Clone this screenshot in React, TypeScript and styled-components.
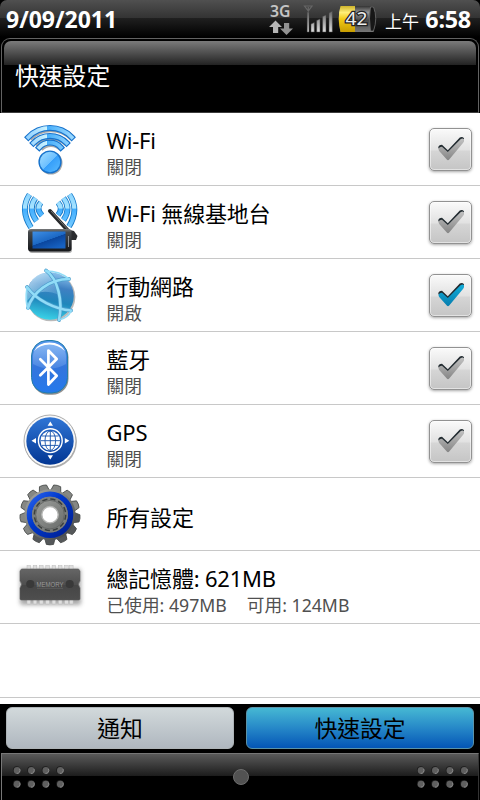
import React, { useState } from 'react'
import styled, { createGlobalStyle } from 'styled-components'

const WifiArcs = 'M28.3 24.2A30 30 0 0 1 71.7 24.2M33.4 30A23 23 0 0 1 66.6 30M39.2 34.4A14.5 14.5 0 0 1 60.8 34.4'

const WifiIcon = () => (
  <Icon viewBox="0 0 100 72">
    <defs>
      <linearGradient id="wfA" gradientUnits="userSpaceOnUse" x1="26" y1="0" x2="76" y2="0">
        <stop offset="0" stopColor="#8fd0ff" />
        <stop offset=".41" stopColor="#c9f2ff" />
        <stop offset=".42" stopColor="#45aefb" />
        <stop offset="1" stopColor="#a5deff" />
      </linearGradient>
      <linearGradient id="wfB" x1="0" y1="0" x2="1" y2="1">
        <stop offset="0" stopColor="#a5deff" />
        <stop offset=".5" stopColor="#6cc0ff" />
        <stop offset=".52" stopColor="#369ffa" />
        <stop offset="1" stopColor="#58baff" />
      </linearGradient>
    </defs>
    <path d={WifiArcs} fill="none" stroke="#555" strokeOpacity=".5" strokeWidth="6.2" transform="translate(1 1.2)" />
    <path d={WifiArcs} fill="none" stroke="#1672cc" strokeWidth="6" strokeLinecap="square" />
    <path d={WifiArcs} fill="none" stroke="url(#wfA)" strokeWidth="3.8" strokeLinecap="square" />
    <circle cx="50.9" cy="50" r="11.6" fill="#555" opacity=".5" />
    <circle cx="50" cy="49" r="11.6" fill="#1672cc" />
    <circle cx="50" cy="49" r="10.2" fill="url(#wfB)" />
  </Icon>
)

const waves = 'M29.5 8.5Q19.5 23.5 31 41.5M35.5 12Q27.5 22.5 36.5 35M41 16.5Q35.5 22.5 42 29.5M69.5 8.5Q79.5 23.5 69 40.5M63.5 12Q71.5 22.5 63.5 34M58 16.5Q63.5 22.5 58 29'

const HotspotIcon = () => (
  <Icon viewBox="0 0 100 72">
    <defs>
      <linearGradient id="hsW" gradientUnits="userSpaceOnUse" x1="0" y1="6" x2="0" y2="42">
        <stop offset="0" stopColor="#86d2ff" />
        <stop offset=".45" stopColor="#a8e4ff" />
        <stop offset=".47" stopColor="#42aeff" />
        <stop offset="1" stopColor="#78ccff" />
      </linearGradient>
      <linearGradient id="hsP" x1="0" y1="0" x2="0" y2="1">
        <stop offset="0" stopColor="#77797b" />
        <stop offset=".15" stopColor="#45484b" />
        <stop offset="1" stopColor="#15171a" />
      </linearGradient>
      <linearGradient id="hsS" x1="0" y1="0" x2=".7" y2="1">
        <stop offset="0" stopColor="#3f90e6" />
        <stop offset=".55" stopColor="#1c68c4" />
        <stop offset=".57" stopColor="#0a469e" />
        <stop offset="1" stopColor="#1762c2" />
      </linearGradient>
    </defs>
    <path d={waves} fill="none" stroke="#177bca" strokeWidth="5.8" />
    <path d={waves} fill="none" stroke="url(#hsW)" strokeWidth="4.1" />
    <rect x="29" y="45" width="43" height="22" rx="3" fill="#555" opacity=".5" />
    <path d="M50 25L71 48" stroke="#27292b" strokeWidth="4" strokeLinecap="round" />
    <path d="M51 25L71 47" stroke="#777" strokeWidth="1" />
    <path d="M66 43L74 45L77.5 50L76 54L68 54Z" fill="#2a2c2f" />
    <rect x="28" y="43" width="43.5" height="22.5" rx="3" fill="url(#hsP)" />
    <rect x="32.5" y="45.5" width="33" height="17" fill="url(#hsS)" />
    <path d="M68.5 50V61" stroke="#8b8e91" strokeWidth="1" />
  </Icon>
)

const NetworkIcon = () => (
  <Icon viewBox="0 0 100 72">
    <defs>
      <linearGradient id="ntA" x1=".6" y1="0" x2=".4" y2="1">
        <stop offset="0" stopColor="#8cc4ee" />
        <stop offset=".3" stopColor="#3f80c2" />
        <stop offset=".6" stopColor="#1f86bb" />
        <stop offset="1" stopColor="#3bd5e9" />
      </linearGradient>
      <linearGradient id="ntB" x1="0" y1="0" x2="1" y2="1">
        <stop offset="0" stopColor="#e4f6ff" />
        <stop offset="1" stopColor="#5da9dc" stopOpacity=".3" />
      </linearGradient>
    </defs>
    <circle cx="51" cy="38" r="24.3" fill="#666" opacity=".45" />
    <circle cx="50" cy="37" r="23.8" fill="url(#ntA)" />
    <path d="M27 33Q31 14 49 13.5Q58 22 60 36Q38 27 27 42Z" fill="url(#ntB)" opacity=".85" />
    <g fill="none" stroke="#4b9dcc" strokeWidth="3.8" strokeLinecap="round">
      <path d="M46 11.5C58 20 63 42 59 61" />
      <path d="M27 28C36 41 55 50 71 51.5" />
      <path d="M69 20C49 20 32 34 28 49" />
    </g>
    <g fill="none" stroke="#91dcf7" strokeWidth="2.6" strokeLinecap="round">
      <path d="M46 11.5C58 20 63 42 59 61" />
      <path d="M27 28C36 41 55 50 71 51.5" />
      <path d="M69 20C49 20 32 34 28 49" />
      <path d="M27 29Q25 42 28 50M46 12Q60 12 69 20M59 61Q68 59 71 52" strokeWidth="1.7" />
    </g>
  </Icon>
)

const BluetoothIcon = () => (
  <Icon viewBox="0 0 100 72">
    <defs>
      <linearGradient id="btA" x1="0" y1="0" x2="0" y2="1">
        <stop offset="0" stopColor="#5598ed" />
        <stop offset=".5" stopColor="#3475dc" />
        <stop offset="1" stopColor="#2479ec" />
      </linearGradient>
      <linearGradient id="btB" x1="0" y1="0" x2="0" y2="1">
        <stop offset="0" stopColor="#b5d6fb" />
        <stop offset="1" stopColor="#5d94e7" />
      </linearGradient>
    </defs>
    <rect x="32" y="9.3" width="36.5" height="53.5" rx="16" fill="#444" opacity=".6" />
    <rect x="31.5" y="8.5" width="36" height="52.5" rx="15.5" fill="url(#btA)" stroke="#237eaa" />
    <path d="M33 32V25Q33 12 49.5 11Q66 12 66 25V32Q50 41 33 32Z" fill="url(#btB)" opacity=".55" />
    <path d="M34 19Q38 10.5 49.5 10.5Q61 10.5 65 19Q58 12.5 49.5 12.5Q40 12.5 34 19Z" fill="#fff" />
    <path d="M40.3 27.3L56.7 43.8L48.4 52.5V18.5L56.7 27L40.3 43.3" fill="none" stroke="#fff" strokeWidth="2.7" strokeLinecap="round" strokeLinejoin="round" />
  </Icon>
)

const GpsIcon = () => (
  <Icon viewBox="0 0 100 72">
    <defs>
      <linearGradient id="gpA" x1="0" y1="0" x2="0" y2="1">
        <stop offset="0" stopColor="#2f75d5" />
        <stop offset="1" stopColor="#023693" />
      </linearGradient>
    </defs>
    <circle cx="50.5" cy="37" r="26.3" fill="#888" opacity=".65" />
    <circle cx="50" cy="36" r="26" fill="#f8f8f8" stroke="#999" strokeWidth=".8" />
    <circle cx="50" cy="36" r="23.7" fill="url(#gpA)" />
    <circle cx="50.3" cy="35.7" r="11.9" fill="none" stroke="#fff" strokeWidth="1.4" />
    <g fill="#fff">
      <path d="M50.3 16.5L53 20.8H47.6ZM50.3 54.5L53 50.3H47.6ZM31.5 35.7L36 33V38.4ZM69.3 35.7L64.8 33V38.4Z" />
      <circle cx="50.3" cy="35.7" r="9.8" />
    </g>
    <g fill="none" stroke="#1451aa" strokeWidth=".9">
      <path d="M50.3 26V45.4M40.6 35.7H60M42 31H58.6M42 40.4H58.6" />
      <ellipse cx="50.3" cy="35.7" rx="5.3" ry="9.7" />
    </g>
  </Icon>
)

const teeth = Array.from({ length: 13 }, (_, i) => (i * 360) / 13 + 14)

const GearIcon = () => (
  <Icon viewBox="0 0 100 72">
    <defs>
      <linearGradient id="grA" gradientUnits="userSpaceOnUse" x1="28" y1="8" x2="72" y2="62">
        <stop offset="0" stopColor="#a9aaa6" />
        <stop offset=".45" stopColor="#7d7f7c" />
        <stop offset="1" stopColor="#3f4245" />
      </linearGradient>
      <linearGradient id="grC" x1="0" y1="0" x2="1" y2="1">
        <stop offset="0" stopColor="#9c9e9b" />
        <stop offset="1" stopColor="#696c6a" />
      </linearGradient>
      <linearGradient id="grB" x1="0" y1="0" x2="1" y2="1">
        <stop offset="0" stopColor="#2a63ec" />
        <stop offset=".4" stopColor="#0038cc" />
        <stop offset="1" stopColor="#001f91" />
      </linearGradient>
    </defs>
    <g stroke="#444746" strokeWidth=".8">
      {teeth.map((a) => (
        <path key={a} d="M44.8 13L46.4 7Q50 6 53.6 7L55.2 13Z" fill={a > 90 && a < 220 ? '#55585a' : '#858784'} transform={`rotate(${a} 50 36.7)`} />
      ))}
    </g>
    <circle cx="50" cy="36.7" r="25.5" fill="url(#grA)" />
    <circle cx="50" cy="36.7" r="20.6" fill="none" stroke="url(#grB)" strokeWidth="5.4" />
    <circle cx="50" cy="36.7" r="17.9" fill="#7c7f7d" />
    <circle cx="50" cy="36.7" r="15.7" fill="none" stroke="#3c403f" strokeWidth="1.5" strokeDasharray="5.2 3" />
    <circle cx="50" cy="36.7" r="14.3" fill="url(#grC)" stroke="#5a5d5b" strokeWidth=".7" />
    <circle cx="50" cy="36.7" r="8.2" fill="#fff" stroke="#b5b6b4" strokeWidth="1.4" />
  </Icon>
)

const pins = [29, 35.2, 41.5, 47.8, 54.1, 60.4, 66.7, 71.5]

const MemoryIcon = () => (
  <Icon viewBox="0 0 100 72">
    <defs>
      <linearGradient id="mmA" x1="0" y1="0" x2="0" y2="1">
        <stop offset="0" stopColor="#666" />
        <stop offset=".5" stopColor="#4f4f4f" />
        <stop offset=".52" stopColor="#464646" />
        <stop offset="1" stopColor="#4e4e4e" />
      </linearGradient>
      <filter id="mmS" x="-20%" y="-20%" width="140%" height="150%">
        <feGaussianBlur stdDeviation="2" />
      </filter>
    </defs>
    <rect x="20" y="18" width="61" height="36" rx="2" fill="#555" opacity=".5" filter="url(#mmS)" />
    {pins.map((x) => (
      <g key={x} fill="#dedede" stroke="#bbb" strokeWidth=".5">
        <rect x={x - 2} y="14.5" width="3.6" height="5" />
        <rect x={x - 2} y="48" width="3.6" height="5" />
      </g>
    ))}
    <path d="M21.5 18H78.5L80 20V30Q77 33 80 37V48Q80 49 78.5 49H21.5Q20 49 20 48V37Q23 33 20 30V20Z" fill="url(#mmA)" stroke="#5c5c5c" strokeWidth=".6" />
    <circle cx="30.3" cy="33" r="4.1" fill="#393939" />
    <circle cx="69.7" cy="33" r="4.1" fill="#393939" />
    <text x="36.5" y="35.5" textLength="27" lengthAdjust="spacingAndGlyphs" fontFamily="Liberation Sans, sans-serif" fontSize="7" fill="#999">MEMORY</text>
    <path d="M37 37.3H63" stroke="#666" strokeWidth=".7" />
  </Icon>
)

const Check = ({ on }: { on: boolean }) => (
  <svg width="43" height="43" viewBox="0 0 43 43">
    <defs>
      <linearGradient id={on ? 'ckOn' : 'ckOff'} x1="0" y1="0" x2="0" y2="1">
        <stop offset="0" stopColor={on ? '#12aeda' : '#c2c2c2'} />
        <stop offset="1" stopColor={on ? '#087dae' : '#858585'} />
      </linearGradient>
    </defs>
    <path d="M9.3 19.5Q9.6 16.8 13 16.8L18.8 22.3L30.8 9.4Q33.5 8.2 35 10.3V12.5L19 31L9.3 20Z" fill="#222b30" />
    <path d="M9.6 20.4Q10.5 18.6 13 18.7L18.8 24L31.8 10.9Q34 9.9 35 11.2Q35.2 12.8 34.4 14.6L20.2 31.5Q19 32.8 17.8 31.5L10.2 23Q9.3 21.7 9.6 20.4Z" fill={`url(#${on ? 'ckOn' : 'ckOff'})`} />
  </svg>
)

const StatusIcons = () => (
  <svg width="112" height="36" viewBox="266 0 112 36">
    <defs>
      <linearGradient id="stG" x1="0" y1="0" x2="0" y2="1">
        <stop offset="0" stopColor="#666" />
        <stop offset="1" stopColor="#e0e0e0" />
      </linearGradient>
      <linearGradient id="stY" x1="0" y1="0" x2="0" y2="1">
        <stop offset="0" stopColor="#cdb32b" />
        <stop offset=".25" stopColor="#ffee78" />
        <stop offset=".5" stopColor="#f1cb16" />
        <stop offset="1" stopColor="#c79c00" />
      </linearGradient>
      <linearGradient id="stB" x1="0" y1="0" x2="0" y2="1">
        <stop offset="0" stopColor="#333" />
        <stop offset=".25" stopColor="#969696" />
        <stop offset=".55" stopColor="#484848" />
        <stop offset="1" stopColor="#777" />
      </linearGradient>
    </defs>
    <text x="270" y="17" textLength="20.5" lengthAdjust="spacingAndGlyphs" fontFamily="Noto Sans, sans-serif" fontWeight="600" fontSize="15.5" fill="#c4c4c4">3G</text>
    <path d="M275.5 20.5L282 27H278.2V33H273V27H269Z" fill="#b5b5b5" />
    <path d="M286.5 35L293 28.5H289.2V23H284V28.5H280Z" fill="#929292" />
    <path d="M304.5 6H312L308.3 11ZM308.3 7V32" fill="none" stroke="#666" strokeWidth="1.2" />
    <path d="M307.2 12H309V32H307.2ZM311 24L314.3 22.5V32H311ZM316.7 20.5L320 19V32H316.7ZM322.6 16.5L326 15V32H322.6ZM329 13L332.3 11V32H329Z" fill="url(#stG)" stroke="#444" strokeWidth=".5" />
    <path d="M340.5 6H373.5Q377 18 373.5 32H340.5Q337 18 340.5 6Z" fill="url(#stB)" />
    <path d="M340.5 6H355V32H340.5Q337 18 340.5 6Z" fill="url(#stY)" />
    <path d="M370.5 7Q368.5 18 370.5 31L373.5 31Q378 18 373.5 7Z" fill="#171717" stroke="#777" strokeWidth=".7" />
    <text x="345.5" y="25" textLength="22" lengthAdjust="spacingAndGlyphs" fontFamily="Noto Sans, sans-serif" fontSize="18" fill="#eee" stroke="#222" strokeWidth="2.5" paintOrder="stroke">42</text>
  </svg>
)

const dots = [16.7, 31, 45.5, 60]

const Grip = ({ start }: { start: number }) => (
  <svg width="76" height="46" viewBox={`${start} 0 76 46`}>
    {dots.map((x) => [16, 29.7].map((y) => (
      <g key={x + '-' + y}>
        <circle cx={x} cy={y} r="3.8" fill="#1b1b1b" />
        <circle cx={x + 0.4} cy={y + 0.5} r="3.4" fill="#5f5f5f" />
        <path d={`M${x + 3} ${y - 1}A3.2 3.2 0 0 1 ${x} ${y + 3.5}`} fill="none" stroke="#8c8c8c" strokeWidth=".9" />
      </g>
    )))}
  </svg>
)

const items = [
  { icon: <WifiIcon />, name: 'Wi-Fi', toggle: true },
  { icon: <HotspotIcon />, name: 'Wi-Fi 無線基地台', toggle: true },
  { icon: <NetworkIcon />, name: '行動網路', toggle: true },
  { icon: <BluetoothIcon />, name: '藍牙', toggle: true },
  { icon: <GpsIcon />, name: 'GPS', toggle: true },
  { icon: <GearIcon />, name: '所有設定' },
  { icon: <MemoryIcon />, name: '總記憶體: 621MB', used: '已使用: 497MB', free: '可用: 124MB' },
]

const App = () => {
  const [on, setOn] = useState([false, false, true, false, false])
  const [tab, setTab] = useState('quick')
  const flip = (n: number) => {
    setOn(on.map((v, i) => (i === n ? !v : v)))
  }

  return (
    <Screen>
      <Global />
      <StatusBar>
        <DateText>9/09/2011</DateText>
        <StatusIcons />
        <Ampm>上午</Ampm>
        <Clock>6:58</Clock>
      </StatusBar>
      <Header>
        <Title>快速設定</Title>
      </Header>
      <List>
        {items.map((it, i) => (
          <Row key={it.name}>
            {it.icon}
            <Info>
              <Name>{it.name}</Name>
              {it.toggle ? <Sub>{on[i] ? '開啟' : '關閉'}</Sub> : null}
              {it.used ? <Sub><span>{it.used}</span><span>{it.free}</span></Sub> : null}
            </Info>
            {it.toggle ? (
              <Box onClick={() => flip(i)} aria-pressed={on[i]}>
                <Check on={on[i]} />
              </Box>
            ) : null}
          </Row>
        ))}
        <EmptyRow />
      </List>
      <Tabs>
        <Tab $active={tab === 'notify'} onClick={() => setTab('notify')}>通知</Tab>
        <Tab $active={tab === 'quick'} onClick={() => setTab('quick')}>快速設定</Tab>
      </Tabs>
      <Handle>
        <Grip start={2} />
        <Knob />
        <Grip start={-2} />
      </Handle>
    </Screen>
  )
}
export default App

const Global = createGlobalStyle`
*{box-sizing:border-box;}
body{
  margin:0;
  background:#000;
}
`
const Screen = styled.div`
width:480px;
height:800px;
display:flex;
flex-direction:column;
overflow:hidden;
background:#000;
font-family:"Noto Sans", "Noto Sans CJK TC", sans-serif;
`
const StatusBar = styled.div`
height:38px;
display:flex;
align-items:flex-start;
padding:0 9px 0 6px;
color:#fff;
border-radius:7px 7px 0 0;
background:linear-gradient(#505050 0, #333 18px, #202020 18px, #000 37px);
`
const DateText = styled.div`
width:260px;
font-size:23px;
font-weight:700;
line-height:39px;
`
const Ampm = styled.div`
width:34px;
margin-left:7px;
font-size:17px;
line-height:43px;
white-space:nowrap;
`
const Clock = styled.div`
flex:1;
display:flex;
justify-content:flex-end;
font-size:23.3px;
font-weight:700;
line-height:39px;
letter-spacing:-0.2px;
white-space:nowrap;
`
const Header = styled.div`
height:75px;
padding:2px 2px 0;
margin:0 1px;
border:1px solid #626262;
border-bottom-color:#3c3c3c;
border-radius:9px 9px 0 0;
background:#000;
`
const Title = styled.div`
height:70px;
padding:0 11px;
border-radius:7px 7px 0 0;
color:#fff;
font-size:23.8px;
line-height:71px;
background:linear-gradient(#7b7b7b 0, #222 24px, #000 24px);
`
const List = styled.div`
height:591px;
background:#fff;
`
const Row = styled.div`
height:73px;
display:flex;
align-items:center;
padding-right:8px;
border-bottom:1px solid #c8c8c8;
`
const EmptyRow = styled.div`
height:74px;
border-bottom:1px solid #c8c8c8;
`
const Icon = styled.svg`
width:100px;
height:72px;
flex-shrink:0;
`
const Info = styled.div`
flex:1;
padding:6px 0 0 6.5px;
white-space:nowrap;
`
const Name = styled.div`
font-size:22px;
line-height:26px;
letter-spacing:-0.2px;
color:#000;
`
const Sub = styled.div`
height:24px;
display:flex;
gap:20px;
font-size:17.7px;
line-height:28px;
color:#505050;
`
const Box = styled.button`
width:43px;
height:43px;
padding:0;
display:flex;
align-items:center;
justify-content:center;
border:1px solid #929292;
border-radius:5px;
background:linear-gradient(#fafafa, #e2e2e2 50%, #d5d5d5 55%, #c5c5c5);
box-shadow:inset 0 0 0 1px rgba(255, 255, 255, 0.5), 0 1px 3px rgba(0, 0, 0, 0.35);
svg{flex-shrink:0;}
`
const Tabs = styled.div`
height:49px;
display:flex;
gap:12px;
padding:3px 6px 4px;
background:#000;
`
const Tab = styled.button<{ $active: boolean }>`
flex:1;
padding:2px 0 0;
border:1px solid ${(p) => (p.$active ? '#5b93a8' : '#aeb4b7')};
border-radius:6px;
font-family:inherit;
font-size:22.8px;
line-height:38px;
color:#000;
background:${(p) => (p.$active ? 'linear-gradient(#46b8d3, #2688c8 50%, #0456b6)' : 'linear-gradient(#d2d9db, #afb7bf)')};
`
const Handle = styled.div`
height:47px;
display:flex;
align-items:flex-start;
justify-content:space-between;
margin:0 1px;
border:1px solid #777;
border-right-color:#333;
border-bottom:0;
background:linear-gradient(#5a5a5a 0, #1c1c1c 22px, #000 22px);
`
const Knob = styled.div`
width:16px;
height:16px;
margin:15px 0 0 2px;
border-radius:50%;
border:1px solid #6e6e6e;
background:#525252;
`
